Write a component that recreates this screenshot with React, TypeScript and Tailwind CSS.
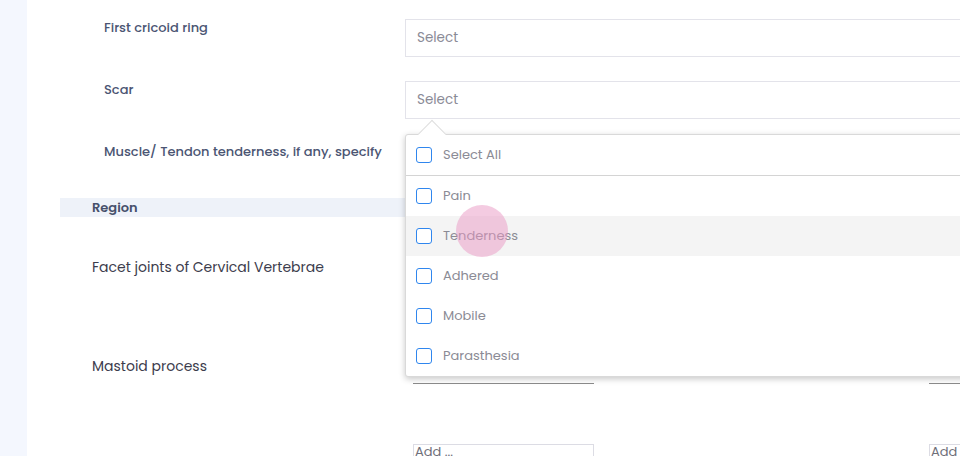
const font = { fontFamily: 'Poppins, Inter, "Noto Sans", sans-serif' };

const topRows = ['First cricoid ring', 'Scar', 'Muscle/ Tendon tenderness, if any, specify'];
const options = ['Pain', 'Tenderness', 'Adhered', 'Mobile', 'Parasthesia'];

function Checkbox() {
  return <span className="block h-4 w-4 shrink-0 rounded-[3px] border-[1.5px] border-[#2f86ee] bg-white" />;
}

function SelectBox() {
  return (
    <div className="flex h-[38px] items-center border border-[#e3e3ea] bg-white pl-[11px] text-[13.5px] text-[#8a8a96]">
      Select
    </div>
  );
}

function Dropdown() {
  return (
    <div className="absolute left-[378px] top-[134px] w-[700px] rounded-[3px] border border-[#d9d9d9] bg-white shadow-[0_2px_6px_rgba(0,0,0,0.22)]">
      <span className="absolute -top-[11px] left-[16px] h-5 w-5 rotate-45 border-l border-t border-[#dedede] bg-white" />
      <div className="relative flex h-[41px] items-center gap-[11px] border-b border-[#d4d4d4] pl-[10px] text-[13px] text-[#8b8b95]">
        <Checkbox />
        <span>Select All</span>
      </div>
      {options.map((o, i) => (
        <div
          key={o}
          className={`relative flex h-10 items-center gap-[11px] pl-[10px] text-[13px] text-[#8b8b95] ${i === 1 ? 'bg-[#f4f4f4]' : ''}`}
        >
          <Checkbox />
          <span>{o}</span>
          {i === 1 && (
            <span className="absolute left-[50px] top-[-11px] h-[52px] w-[52px] rounded-full bg-[#ea98c4]/50" />
          )}
        </div>
      ))}
    </div>
  );
}

export default function App() {
  return (
    <div style={font} className="flex h-[456px] w-[960px] overflow-hidden bg-white">
      <div className="w-[27px] shrink-0 bg-[#f4f7fe]" />
      <div className="relative flex-1 overflow-hidden">
        <div className="w-[1100px]">
          <div className="grid grid-cols-[301px_1fr] gap-y-[24px] pl-[77px] pt-[19px]">
            {topRows.map((label) => (
              <div key={label} className="contents">
                <div className="text-[13px] font-medium leading-[18px] text-[#4b5573]">{label}</div>
                <SelectBox />
              </div>
            ))}
          </div>

          <div className="ml-[33px] mt-[17px] flex h-[19px] items-center bg-[#eef2f9] pl-[32px] text-[13px] font-semibold text-[#46506b]">
            Region
          </div>

          <div className="grid grid-cols-[321px_181px_335px_181px] pl-[65px] text-[14px] text-[#3c3c4c]">
            <div className="h-[100px] pt-[41px] leading-[18px]">Facet joints of Cervical Vertebrae</div>
            <div />
            <div />
            <div />

            <div className="pt-[40px] leading-[18px]">Mastoid process</div>
            {[0, 1].map((k) => (
              <div key={k} className={`flex flex-col pt-[40px] ${k === 1 ? 'col-start-4' : ''}`}>
                <div className="h-[27px] border-b border-[#8c8c8c]" />
                <div className="mt-[60px] flex h-[26px] items-start border border-[#dcdce4] pl-[1px] text-[13px] leading-[14px] text-[#6f6f7a]">
                  Add ...
                </div>
              </div>
            ))}
          </div>
        </div>

        <Dropdown />
      </div>
    </div>
  );
}
